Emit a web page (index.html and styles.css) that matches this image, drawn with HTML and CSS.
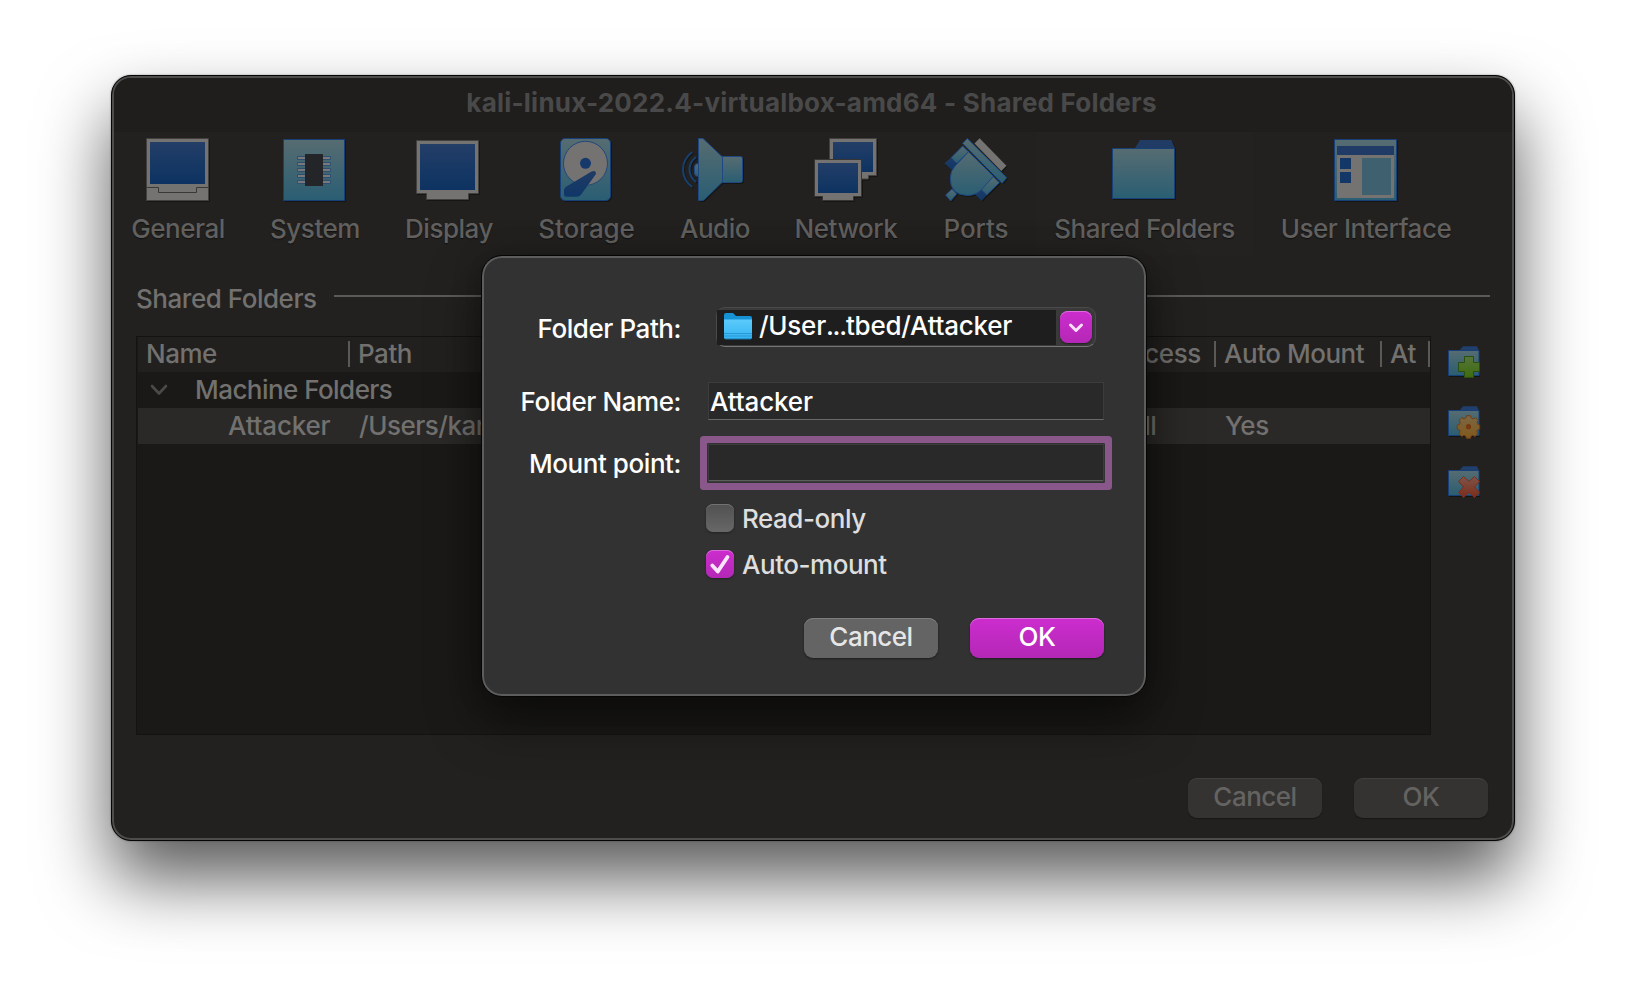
FILE: index.html
```
<!DOCTYPE html>
<html lang="en">
<head>
<meta charset="utf-8">
<title>kali-linux-2022.4-virtualbox-amd64 - Shared Folders</title>
<link rel="stylesheet" href="styles.css">
</head>
<body>
<svg class="defs" width="0" height="0" aria-hidden="true">
  <defs>
    <linearGradient id="screen" x1="0" y1="0" x2="0" y2="1"><stop offset="0" stop-color="#233e67"/><stop offset="1" stop-color="#0d3362"/></linearGradient>
    <linearGradient id="teal" x1="0" y1="0" x2="0" y2="1"><stop offset="0" stop-color="#566c71"/><stop offset="1" stop-color="#2a5e73"/></linearGradient>
    <linearGradient id="navy" x1="0" y1="0" x2="0" y2="1"><stop offset="0" stop-color="#203b64"/><stop offset="1" stop-color="#0f3768"/></linearGradient>
    <linearGradient id="green" x1="0" y1="0" x2="0" y2="1"><stop offset="0" stop-color="#55743c"/><stop offset="1" stop-color="#3f6c0c"/></linearGradient>
    <linearGradient id="amber" x1="0" y1="0" x2="0" y2="1"><stop offset="0" stop-color="#7c6745"/><stop offset="1" stop-color="#80591b"/></linearGradient>
    <linearGradient id="red" x1="0" y1="0" x2="0" y2="1"><stop offset="0" stop-color="#7d5549"/><stop offset="1" stop-color="#7c2c1a"/></linearGradient>
    <linearGradient id="sky" x1="0" y1="0" x2="0" y2="1"><stop offset="0" stop-color="#5ccbfb"/><stop offset="1" stop-color="#35b4f2"/></linearGradient>
    <g id="mini-folder">
      <path d="M11 5 15 .3H29L31 5z" fill="#203f6c"/>
      <path d="M.5 4.500H31V29.500H.5z" fill="url(#teal)" stroke="#173f78"/>
      <path d="M1 30.500H32" stroke="#141413"/>
    </g>
  </defs>
</svg>
<main class="desktop">
  <section class="window">
    <header class="titlebar">kali-linux-2022.4-virtualbox-amd64 - Shared Folders</header>
    <nav class="toolbar">
      <div class="tab"><svg class="ico" viewBox="0 0 64 64"><path d="M.5.500H62.500V62.500H.5z" fill="#757371" stroke="#42413f"/><path d="M4 4H59V46H4z" fill="url(#screen)"/><path d="M.5 49.500H12.500V54.500H50.500V49.500H62.500" fill="none" stroke="#393836"/></svg><span>General</span></div>
      <div class="tab"><svg class="ico" viewBox="0 0 64 64"><path d="M.5 1.500H61.500V62.500H.5z" fill="url(#teal)" stroke="#173f78"/><g fill="#7b7977" stroke="#2c4f73"><path d="M14.500 18.500h33v3h-33zM14.500 24.500h33v3h-33zM14.500 30.500h33v3h-33zM14.500 36.500h33v3h-33zM14.500 42.500h33v3h-33z"/></g><path d="M22 16h18v32H22z" fill="#242529"/></svg><span>System</span></div>
      <div class="tab"><svg class="ico" viewBox="1 0 64 64"><path d="M.5 2.500H62.500V55.500H52.500V61.500H10.500V55.500H.5z" fill="#757371" stroke="#42413f"/><path d="M4 6H59V52H4z" fill="url(#screen)"/></svg><span>Display</span></div>
      <div class="tab"><svg class="ico" viewBox="0 0 64 64"><rect x="5.500" y=".5" width="50" height="62" rx="4.500" fill="url(#teal)" stroke="#173f78"/><circle cx="30.500" cy="25.300" r="22" fill="#757371" stroke="#23477a"/><circle cx="30.500" cy="25.300" r="5.500" fill="#16396b"/><path d="M9 51.500Q9.500 50 11.500 48.500L36.500 33.500Q41 31.500 41 36L26.500 56Q25 58.800 22 58.800H11Q9 58.800 9 56z" fill="url(#navy)"/></svg><span class="wide">Storage</span></div>
      <div class="tab"><svg class="ico" viewBox="0 0 64 64"><g fill="url(#teal)" stroke="#1d4883"><path d="M15.500 25.500Q11.500 25.500 11.500 29V35Q11.500 38.500 15.500 38.500z"/><path d="M39.500 18.500H57.500Q59.500 18.500 59.500 20.500V42.500Q59.500 44.500 57.500 44.500H39.500z"/><path d="M15.500.5H20L39.500 19V44L21.500 61.500Q20.500 62.500 19.500 62.500H15.500z"/></g><path d="M9.200 14Q0 21 0 31.500T9.200 49M13 19Q6.500 24 6.500 31.500T13 44" fill="none" stroke="#18406f" stroke-width="2"/></svg><span>Audio</span></div>
      <div class="tab"><svg class="ico" viewBox="0 0 64 64"><path d="M15.500.5H62.500V37.500H54.500V41H46V37H15.500z" fill="#757371" stroke="#42413f"/><path d="M19 4H59V34H19z" fill="url(#screen)"/><path d="M.5 21.500H47.500V58.500H39.500V62.500H8.500V58.500H.5z" fill="#757371" stroke="#363533"/><path d="M4 25H44V55H4z" fill="url(#screen)"/></svg><span>Network</span></div>
      <div class="tab"><svg class="ico" viewBox="0 0 64 64"><path d="M30.500 5.500 35.600.3 62.500 27.700 57.300 33z" fill="#757371"/><g fill="url(#navy)"><path d="M7 19.700 12.700 25.300 7.900 32 .4 25.300z"/><path d="M36.800 51.300 42.700 57 37.600 63 30.800 56z"/></g><g fill="url(#teal)" stroke="#1d4883"><path d="M1.600 57 7.900 51 12.700 56 6.700 63z"/><path d="M18.600 8 24.500 13.700 12.700 25.300 7.100 19.700z"/><path d="M49.400 38.700 55.400 44.700 42.700 57 36.800 51.300z"/><path d="M24.500 13.700 49.400 38.300 38 51Q32 57.500 23.500 57.500 6 57 6.300 40 6.500 33 11 28z"/><path d="M18.600 5.300 23.300.5 62.700 39.700 58.100 45.300z"/></g></svg><span class="wide">Ports</span></div>
      <div class="tab active"><svg class="ico" viewBox="1 0 64 64"><path d="M22.700 10.500 28 2H59.500L63 10.500z" fill="#203b64"/><path d="M.5 10.500H62.500V60.500H.5z" fill="url(#teal)" stroke="#173f78"/></svg><span>Shared Folders</span></div>
      <div class="tab"><svg class="ico" viewBox="0 0 64 64"><path d="M.5 1.500H62.500V62.500H.5z" fill="url(#teal)" stroke="#173f78"/><path d="M3 17H60V60H3z" fill="#757371"/><path d="M3 8H60V17H3z" fill="#1f3b66"/><path d="M6 20H17V31H6zM6 34H17V45H6z" fill="#133868"/><path d="M28 20H57V57H28z" fill="#3f606f"/></svg><span>User Interface</span></div>
    </nav>
    <div class="content">
      <div class="group"><span>Shared Folders</span><i class="rule"></i></div>
      <div class="body">
        <div class="tree">
          <div class="row head"><div class="cell">Name</div><div class="cell">Path</div><div class="cell">Access</div><div class="cell">Auto Mount</div><div class="cell">At</div></div>
          <div class="row parent"><svg class="chev" viewBox="0 0 18 12"><path d="M2 2 9 9.500 16 2" fill="none" stroke="#4b4a4b" stroke-width="2.600" stroke-linecap="round" stroke-linejoin="round"/></svg><span>Machine Folders</span></div>
          <div class="row selected"><div class="cell child">Attacker</div><div class="cell">/Users/kan</div><div class="cell">Full</div><div class="cell">Yes</div><div class="cell"></div></div>
        </div>
        <div class="side">
          <svg viewBox="0 0 33 33"><use href="#mini-folder"/><path d="M16.500 10.500H25.500V16.500H31.500V25.500H25.500V31.500H16.500V25.500H10.500V16.500H16.500z" fill="url(#green)" stroke="#2b4e13"/></svg>
          <svg viewBox="0 0 33 33"><use href="#mini-folder"/><path d="M18.500 9.700h4l.8 2.300 2 .9 2.200-1.200 2.600 2.700-1.100 2.300.6 1.500 2.100.8v4l-2.200.8-.8 1.800 1.100 2.200-2.800 2.700-2.200-1.100-1.600.7-.8 2.200h-3.900l-.8-2.200-1.800-.8-2.200 1.200-2.700-2.700 1.100-2.300-.7-1.700-2.200-.8v-3.900l2.300-.8.700-1.800-1.200-2.200 2.900-2.700 2.200 1.200 1.700-.8z" fill="url(#amber)" stroke="#713d18"/><circle cx="20.500" cy="20.700" r="2.600" fill="#74390f"/></svg>
          <svg viewBox="0 0 33 33"><use href="#mini-folder"/><path d="M15.500 10.500 21 15.500 26.500 10.500 31.500 15.500 26.500 21 31.500 26.500 26.500 31.500 21 26.500 15.500 31.500 10.500 26.500 15.500 21 10.500 15.500z" fill="url(#red)" stroke="#7a2c1d"/></svg>
        </div>
      </div>
      <footer class="actions"><button class="btn dim">Cancel</button><button class="btn dim">OK</button></footer>
    </div>
  </section>

  <section class="dialog">
    <div class="field f-path"><label>Folder Path:</label>
      <div class="combo"><div class="combo-text"><svg class="folder" viewBox="0 0 28 27"><path d="M0 2Q0 0 2 0H9L12 3H26Q28 3 28 5V10H0z" fill="#1591d4"/><path d="M0 6.500H28V24.500Q28 26 26 26H2Q0 26 0 24.500z" fill="url(#sky)"/><path d="M0 20.500H28M0 23H28" stroke="#2799d6"/><path d="M1 26H27" stroke="#1774ad"/></svg><span>/User<span class="dots">...</span>tbed/Attacker</span></div><div class="drop"><svg viewBox="0 0 32 32"><path d="M10.500 14 16 19.500 21.500 14" fill="none" stroke="#f9dff8" stroke-width="3" stroke-linecap="round" stroke-linejoin="round"/></svg></div></div>
    </div>
    <div class="field f-name"><label>Folder Name:</label><div class="input">Attacker</div></div>
    <div class="field f-mount"><label>Mount point:</label><div class="input focus"></div></div>
    <div class="check"><i class="box"></i><span>Read-only</span></div>
    <div class="check"><i class="box on"><svg viewBox="0 0 28 28"><path d="M6.300 15.500 11.800 21.500 21.500 7" fill="none" stroke="#fae6fa" stroke-width="3.800" stroke-linecap="round" stroke-linejoin="round"/></svg></i><span>Auto-mount</span></div>
    <div class="dialog-actions"><button class="btn gray">Cancel</button><button class="btn primary">OK</button></div>
  </section>
</main>
</body>
</html>
```
FILE: styles.css
```
* { box-sizing: border-box; }
body { margin: 0; background: #fff; font: 450 26px/32px Inter, "Liberation Sans", sans-serif; letter-spacing: -.47px; }
.wide { letter-spacing: -.1px; }
.defs { position: absolute; }
.desktop { position: relative; width: 1626px; height: 988px; padding: 75px 111px; overflow: hidden; }

.window {
  display: flex; flex-direction: column; width: 1404px; height: 766px;
  border: 1px solid #050505; border-radius: 20px; background: #22211f; color: #72716f;
  box-shadow: inset 0 0 0 2px #4e4d4b, 0 0 2px rgba(0,0,0,.4), 0 38px 70px rgba(0,0,0,.65);
}
.titlebar {
  height: 54px; margin: 2px 2px 0; padding-right: 3px; line-height: 49px; text-align: center;
  font-weight: 700; letter-spacing: .22px; color: #4a4949; background: #1f1e1c; border-radius: 17px 17px 0 0;
}
.toolbar {
  display: grid; grid-template-columns: 132px 142px 126px 149px 108px 154px 106px 231px 212px;
  height: 123px; color: #61605f; text-shadow: 0 1px 1px #111;
}
.tab { display: flex; flex-direction: column; align-items: center; gap: 11px; padding-top: 6px; white-space: nowrap; }
.tab.active { margin: 0 7px; background: #232220; }
.ico { width: 64px; height: 64px; overflow: visible; filter: drop-shadow(1px 1px 0 #151514); }

.content { flex: 1; padding: 25px 24px 0; }
.group { display: flex; gap: 17px; height: 56px; line-height: 37px; }
.rule { flex: 1; height: 2px; margin-top: 15px; background: #5b5a58; }
.body { display: flex; justify-content: space-between; }
.tree { width: 1295px; height: 399px; border: 1px solid #141312; background: #1a1917; padding-left: 1px; }
.row { display: grid; grid-template-columns: 212px 756px 110px 166px 48px; width: 1292px; height: 36px; line-height: 36px; }
.row .cell { padding-left: 9px; white-space: nowrap; }
.head { height: 35px; line-height: 33px; background: #21201e; }
.head .cell { padding-left: 8px; background: linear-gradient(#5a5957, #5a5957) right 0 top 4px / 2px 26px no-repeat; }
.head .cell:nth-child(3) { padding-left: 6px; }
.parent { display: flex; align-items: center; gap: 27px; padding-left: 12px; letter-spacing: -.55px; }
.chev { width: 18px; height: 12px; }
.selected { background: #2a2928; }
.row .child { padding-left: 90px; letter-spacing: -.2px; }
.side { display: flex; flex-direction: column; gap: 27px; width: 42px; padding-top: 10px; }
.side svg { width: 33px; height: 33px; overflow: visible; }
.actions { display: flex; justify-content: flex-end; gap: 32px; padding: 43px 2px 0 0; }

.btn {
  width: 134px; height: 40px; padding: 0 0 3px; border: 0; border-radius: 9px;
  font: inherit; letter-spacing: -.5px; line-height: 37px; text-align: center;
}
.dim { background: #343331; color: #646361; box-shadow: inset 0 1px 0 #403f3d, 0 1px 1px #181716; }
.gray { background: #646464; color: #e6e6e6; box-shadow: inset 0 1px 0 #7d7d7d, 0 1px 2px #1e1e1e; }
.primary { background: linear-gradient(#cc2dce, #b427b6); color: #fff; box-shadow: inset 0 1px 0 #dc6cdd, 0 1px 2px #1e1e1e; }

.dialog {
  position: absolute; left: 481px; top: 255px; width: 666px; height: 442px; padding: 51px 0 0;
  border: 1px solid #050505; border-radius: 21px; background: #323232; color: #fff;
  box-shadow: inset 0 0 0 2px #5d5d5d, 0 24px 50px rgba(0,0,0,.5), 0 0 30px rgba(0,0,0,.2);
}
.field { display: flex; white-space: nowrap; }
.field label { width: 200px; padding-right: 1px; text-align: right; letter-spacing: -.43px; }
.f-path { height: 75px; }
.f-path label { line-height: 43px; }
.combo {
  display: flex; width: 380px; height: 40px; margin-left: 34px; padding-top: 2px;
  border: 1px solid #4a4a4a; border-bottom-color: #777; border-radius: 9px; background: #3a3a3a;
}
.combo-text { display: flex; gap: 7px; width: 339px; height: 35px; padding: 3px 0 0 7px; background: #1e1e1e; line-height: 26px; letter-spacing: -.25px; }
.dots { letter-spacing: -1.2px; }
.folder { width: 28px; height: 27px; }
.drop { width: 32px; height: 32px; margin: 1px 0 0 4px; border-radius: 8px; background: linear-gradient(#cc2dce, #b427b6); box-shadow: inset 0 1px 0 #dc6cdd, 0 1px 2px #1e1e1e; }
.drop svg { display: block; }
.f-name { height: 54px; }
.f-name label { line-height: 40px; }
.input { width: 396px; height: 38px; margin-left: 26px; padding-left: 1px; border: 1px solid #3c3c3c; border-bottom: 1px solid #6a6a6a; background: #292929; line-height: 38px; letter-spacing: -.15px; }
.f-mount { height: 68px; }
.f-mount label { line-height: 56px; }
.f-mount .input { width: 398px; height: 40px; margin: 7px 0 0 25px; border-color: #323232; }
.f-mount .focus { border-radius: 1px; box-shadow: inset 0 0 0 1px #3c3c3c, inset 0 -2px 0 #5c5d5a, 0 0 0 7px #895789; }
.check { display: flex; align-items: center; gap: 8px; height: 28px; margin: 0 0 18px 224px; color: #dedede; line-height: 28px; }
.check span { padding-top: 1px; }
.box { width: 28px; height: 28px; border-radius: 7px; background: linear-gradient(#515151, #676767); box-shadow: inset 0 1px 0 #727272, 0 1px 2px #222; }
.box.on { background: linear-gradient(#cc2dce, #b427b6); box-shadow: inset 0 1px 0 #dc6cdd, 0 1px 2px #222; }
.box svg { display: block; }
.dialog-actions { display: flex; gap: 32px; margin: 40px 0 0 322px; }
```
